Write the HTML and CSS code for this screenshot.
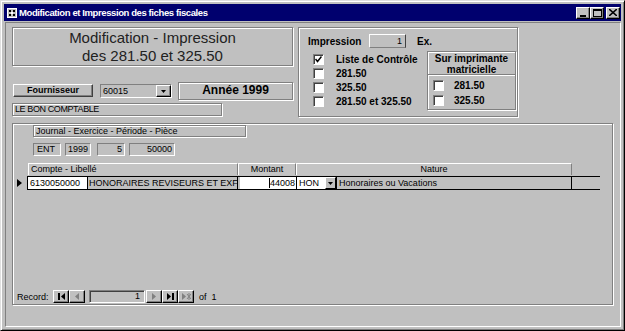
FILE: index.html
```html
<!DOCTYPE html>
<html lang="fr">
<head>
    <meta charset="UTF-8">
    <meta name="viewport" content="width=device-width, initial-scale=1.0">
    <title>Modification et Impression des fiches fiscales</title>
    <link rel="stylesheet" href="styles.css">
</head>
<body>
    <div class="window">
        <div class="titlebar">
            <svg class="title-icon" width="10" height="10" viewBox="0 0 10 10">
                <rect x="0.5" y="0.5" width="9" height="9" fill="#c0c0c0" stroke="#fff"/>
                <rect x="2" y="2" width="2" height="2" fill="#000"/>
                <rect x="6" y="2" width="2" height="2" fill="#000"/>
                <rect x="2" y="6" width="2" height="2" fill="#000"/>
                <rect x="6" y="6" width="2" height="2" fill="#000"/>
                <rect x="4" y="4" width="2" height="2" fill="#fff"/>
            </svg>
            <span class="title">Modification et Impression des fiches fiscales</span>
            <div class="win-btns">
                <span class="win-btn"><svg width="8" height="8" viewBox="0 0 8 8"><rect x="1" y="6" width="6" height="2" fill="#000"/></svg></span>
                <span class="win-btn"><svg width="9" height="8" viewBox="0 0 9 8"><rect x="0.5" y="0.5" width="8" height="7" fill="none" stroke="#000"/><rect x="0" y="0" width="9" height="2" fill="#000"/></svg></span>
                <span class="win-btn close"><svg width="8" height="7" viewBox="0 0 8 7"><path d="M0 0 L8 7 M8 0 L0 7" stroke="#000" stroke-width="1.6"/></svg></span>
            </div>
        </div>

        <div class="client">
            <div class="top">
                <div class="left-col">
                    <div class="heading">Modification - Impression<br>des 281.50 et 325.50</div>
                    <div class="supplier-row">
                        <div class="tag-btn">Fournisseur</div>
                        <div class="combo">
                            <span class="combo-value">60015</span>
                            <span class="combo-drop"><svg width="5" height="3" viewBox="0 0 5 3"><path d="M0 0 H5 L2.5 3Z" fill="#000"/></svg></span>
                        </div>
                        <div class="year">Année 1999</div>
                    </div>
                    <div class="supplier-name">LE BON COMPTABLE</div>
                </div>

                <div class="print-group">
                    <div class="copies-row">
                        <span class="bold-label copies-label">Impression</span>
                        <span class="copies-input">1</span>
                        <span class="bold-label copies-unit">Ex.</span>
                    </div>
                    <div class="print-options">
                        <div class="check-list">
                            <div class="check-row">
                                <span class="checkbox"><svg width="7" height="7" viewBox="0 0 7 7"><path d="M0.5 3 L2.5 5.5 L6.5 0.5" fill="none" stroke="#000" stroke-width="1.5"/></svg></span>
                                <span class="bold-label">Liste de Contrôle</span>
                            </div>
                            <div class="check-row"><span class="checkbox"></span><span class="bold-label">281.50</span></div>
                            <div class="check-row"><span class="checkbox"></span><span class="bold-label">325.50</span></div>
                            <div class="check-row"><span class="checkbox"></span><span class="bold-label">281.50 et 325.50</span></div>
                        </div>
                        <div class="matrix-box">
                            <div class="matrix-head">Sur imprimante<br>matricielle</div>
                            <div class="matrix-list">
                                <div class="check-row"><span class="checkbox"></span><span class="bold-label">281.50</span></div>
                                <div class="check-row"><span class="checkbox"></span><span class="bold-label">325.50</span></div>
                            </div>
                        </div>
                    </div>
                </div>
            </div>

            <div class="subform">
                <div class="journal-label">Journal - Exercice - Période - Pièce</div>
                <div class="journal-fields">
                    <span class="jfield f-journal">ENT</span>
                    <span class="jfield f-year">1999</span>
                    <span class="jfield f-period">5</span>
                    <span class="jfield f-piece">50000</span>
                </div>

                <div class="grid">
                    <div class="grid-head">
                        <span class="head-cell c-account">Compte - Libellé</span>
                        <span class="head-cell c-amount">Montant</span>
                        <span class="head-cell c-nature">Nature</span>
                    </div>
                    <div class="grid-row">
                        <span class="selector"><svg width="5" height="8" viewBox="0 0 5 8"><path d="M0 0 L5 4 L0 8Z" fill="#000"/></svg></span>
                        <div class="row-cells">
                            <span class="cell cell-account">6130050000</span>
                            <span class="cell cell-label">HONORAIRES REVISEURS ET EXF</span>
                            <span class="cell cell-amount"><span class="caret"></span>44008</span>
                            <span class="cell cell-code">HON</span>
                            <span class="cell cell-drop"><svg width="5" height="3" viewBox="0 0 5 3"><path d="M0 0 H5 L2.5 3Z" fill="#000"/></svg></span>
                            <span class="cell cell-nature">Honoraires ou Vacations</span>
                            <span class="cell cell-rest"></span>
                        </div>
                    </div>
                </div>

                <div class="nav-bar">
                    <span class="nav-label">Record:</span>
                    <span class="nav-btn"><svg width="7" height="7" viewBox="0 0 7 7"><rect width="2" height="7" fill="#000"/><path d="M7 0 L3 3.5 L7 7Z" fill="#000"/></svg></span>
                    <span class="nav-btn off"><svg width="5" height="7" viewBox="0 0 5 7"><path d="M4 0 L0 3.5 L4 7Z" fill="#808080"/></svg></span>
                    <span class="nav-pos">1</span>
                    <span class="nav-btn off"><svg width="5" height="7" viewBox="0 0 5 7"><path d="M0 0 L4 3.5 L0 7Z" fill="#808080"/></svg></span>
                    <span class="nav-btn"><svg width="7" height="7" viewBox="0 0 7 7"><path d="M0 0 L4 3.5 L0 7Z" fill="#000"/><rect x="5" width="2" height="7" fill="#000"/></svg></span>
                    <span class="nav-btn off"><svg width="9" height="7" viewBox="0 0 9 7"><path d="M0 0 L4 3.5 L0 7Z" fill="#808080"/><path d="M5 1 L9 6 M9 1 L5 6 M7 0 V7" stroke="#808080"/></svg></span>
                    <span class="nav-total">of&nbsp; 1</span>
                </div>
            </div>
        </div>
    </div>
</body>
</html>
```

FILE: styles.css
```css
* { box-sizing: border-box; }
body { margin: 0; background: #c0c0c0; font-family: "Liberation Sans", Arial, sans-serif; font-size: 9px; color: #000; }

/* window frame */
.window { width: 625px; height: 331px; padding: 3px; display: flex; flex-direction: column; background: #c0c0c0; border: 1px solid; border-color: #dfdfdf #000 #000 #dfdfdf; box-shadow: inset 1px 1px 0 #fff, inset -1px -1px 0 #808080; }
.titlebar { height: 17px; display: flex; align-items: center; padding: 0 1px 0 3px; background: #00006e; color: #fff; }
.title-icon { margin-right: 2px; flex: none; }
.title { flex: 1; font-weight: bold; font-size: 9.5px; letter-spacing: -0.4px; }
.win-btns { display: flex; }
.win-btn { width: 14px; height: 12px; display: flex; align-items: center; justify-content: center; background: #c0c0c0; border: 1px solid; border-color: #fff #000 #000 #fff; box-shadow: inset -1px -1px 0 #808080; }
.win-btn.close { margin-left: 2px; }

.client { flex: 1; margin: 1px 0 0 1px; padding: 4px 0 0 6px; border: 1px solid; border-color: #808080 #fff #fff #808080; }

/* etched boxes */
.heading, .year, .supplier-name, .print-group, .matrix-box, .subform, .journal-label { border: 1px solid #808080; box-shadow: inset 1px 1px 0 #fff, 1px 1px 0 #fff; }

/* top part */
.top { display: flex; gap: 5px; }
.left-col { width: 281px; }
.heading { height: 39px; display: flex; align-items: center; justify-content: center; text-align: center; font-size: 15px; line-height: 18px; color: #222; }
.supplier-row { display: flex; align-items: flex-start; height: 18px; margin-top: 16px; }
.tag-btn { width: 80px; height: 13px; margin: 2px 0 0 1px; text-align: center; font-weight: bold; line-height: 11px; border: 1px solid; border-color: #fff #404040 #404040 #fff; box-shadow: inset -1px -1px 0 #808080; }
.combo { width: 72px; height: 14px; margin: 2px 0 0 7px; display: flex; border: 1px solid; border-color: #808080 #fff #fff #808080; }
.combo-value { flex: 1; padding-left: 2px; line-height: 12px; }
.combo-drop { width: 15px; display: flex; align-items: center; justify-content: center; border: 1px solid; border-color: #fff #000 #000 #fff; box-shadow: inset -1px -1px 0 #808080; }
.year { width: 115px; height: 18px; margin-left: 6px; text-align: center; font-weight: bold; font-size: 12px; line-height: 15px; }
.supplier-name { width: 210px; height: 13px; margin-top: 3px; padding-left: 2px; line-height: 11px; letter-spacing: -0.4px; }

/* print options */
.bold-label { font-weight: bold; font-size: 10px; }
.print-group { width: 220px; height: 90px; padding: 6px 0 0 9px; }
.copies-row { display: flex; align-items: center; height: 14px; }
.copies-label { width: 61px; }
.copies-input { width: 37px; height: 14px; padding-right: 3px; text-align: right; line-height: 12px; border: 1px solid; border-color: #fff #404040 #808080 #fff; }
.copies-unit { margin-left: 11px; }
.print-options { display: flex; margin-top: 3px; }
.check-list { width: 114px; margin: 1px 0 0 5px; }
.check-row { display: flex; align-items: center; height: 14px; }
.checkbox { width: 11px; height: 11px; margin-right: 12px; display: flex; align-items: center; justify-content: center; background: #fff; border: 1px solid; border-color: #808080 #fff #fff #808080; box-shadow: inset 1px 1px 0 #404040; }
.matrix-box { width: 89px; height: 59px; }
.matrix-head { height: 23px; padding-top: 1px; text-align: center; font-weight: bold; font-size: 10px; line-height: 11px; border-bottom: 1px solid #808080; box-shadow: 0 1px 0 #fff; }
.matrix-list { padding: 3px 0 0 5px; }
.matrix-list .check-row { height: 15px; }
.matrix-list .checkbox { margin-right: 10px; }

/* subform */
.subform { width: 601px; height: 182px; margin-top: 6px; display: flex; flex-direction: column; }
.journal-label { width: 213px; height: 12px; margin: 1px 0 0 20px; padding-left: 2px; line-height: 10px; }
.journal-fields { display: flex; height: 13px; margin: 6px 0 0 20px; }
.jfield { height: 13px; padding: 0 2px; line-height: 11px; overflow: hidden; white-space: nowrap; border: 1px solid; border-color: #808080 #fff #fff #808080; }
.f-journal { width: 28px; padding-left: 3px; }
.f-year { width: 26px; margin-left: 4px; }
.f-period { width: 28px; margin-left: 6px; text-align: right; }
.f-piece { width: 46px; margin-left: 4px; text-align: right; }

.grid { margin-top: 7px; }
.grid-head { display: flex; height: 12px; margin-left: 15px; }
.head-cell { height: 12px; line-height: 11px; background: #c4c4c4; border-top: 1px solid #fff; border-left: 1px solid #fff; border-right: 1px solid #808080; }
.c-account { width: 210px; padding-left: 2px; }
.c-amount { width: 58px; text-align: center; }
.c-nature { width: 276px; text-align: center; }
.grid-row { display: flex; height: 14px; margin-top: 1px; }
.selector { width: 15px; display: flex; align-items: center; padding-left: 4px; }
.row-cells { display: flex; width: 572px; border-top: 1px solid #000; border-bottom: 1px solid #000; }
.cell { height: 12px; line-height: 12px; white-space: nowrap; overflow: hidden; }
.cell-account { width: 59px; padding-left: 2px; background: #fff; outline: 1px solid #000; }
.cell-label { width: 151px; padding-left: 2px; border-right: 1px solid #000; }
.cell-amount { width: 58px; padding-right: 1px; display: flex; justify-content: flex-end; align-items: center; background: #fff; border-left: 2px solid #c0c0c0; }
.caret { width: 1px; height: 10px; background: #000; }
.cell-code { width: 29px; padding-left: 2px; background: #fff; border-left: 1px solid #000; }
.cell-drop { width: 11px; display: flex; align-items: center; justify-content: center; border: 1px solid; border-color: #fff #000 #000 #fff; }
.cell-nature { width: 236px; padding-left: 2px; border-left: 1px solid #000; border-right: 1px solid #000; }
.cell-rest { flex: 1; }

/* record navigation */
.nav-bar { display: flex; align-items: center; height: 13px; margin: auto 0 1px; padding-left: 4px; }
.nav-label { width: 36px; }
.nav-btn { width: 16px; height: 13px; display: flex; align-items: center; justify-content: center; border: 1px solid; border-color: #fff #000 #000 #fff; box-shadow: inset -1px -1px 0 #808080; }
.nav-pos { width: 56px; height: 13px; margin: 0 1px 0 4px; padding-right: 4px; text-align: right; line-height: 11px; border: 1px solid; border-color: #808080 #fff #fff #808080; box-shadow: inset 1px 1px 0 #404040; }
.nav-total { margin-left: 5px; }
```
